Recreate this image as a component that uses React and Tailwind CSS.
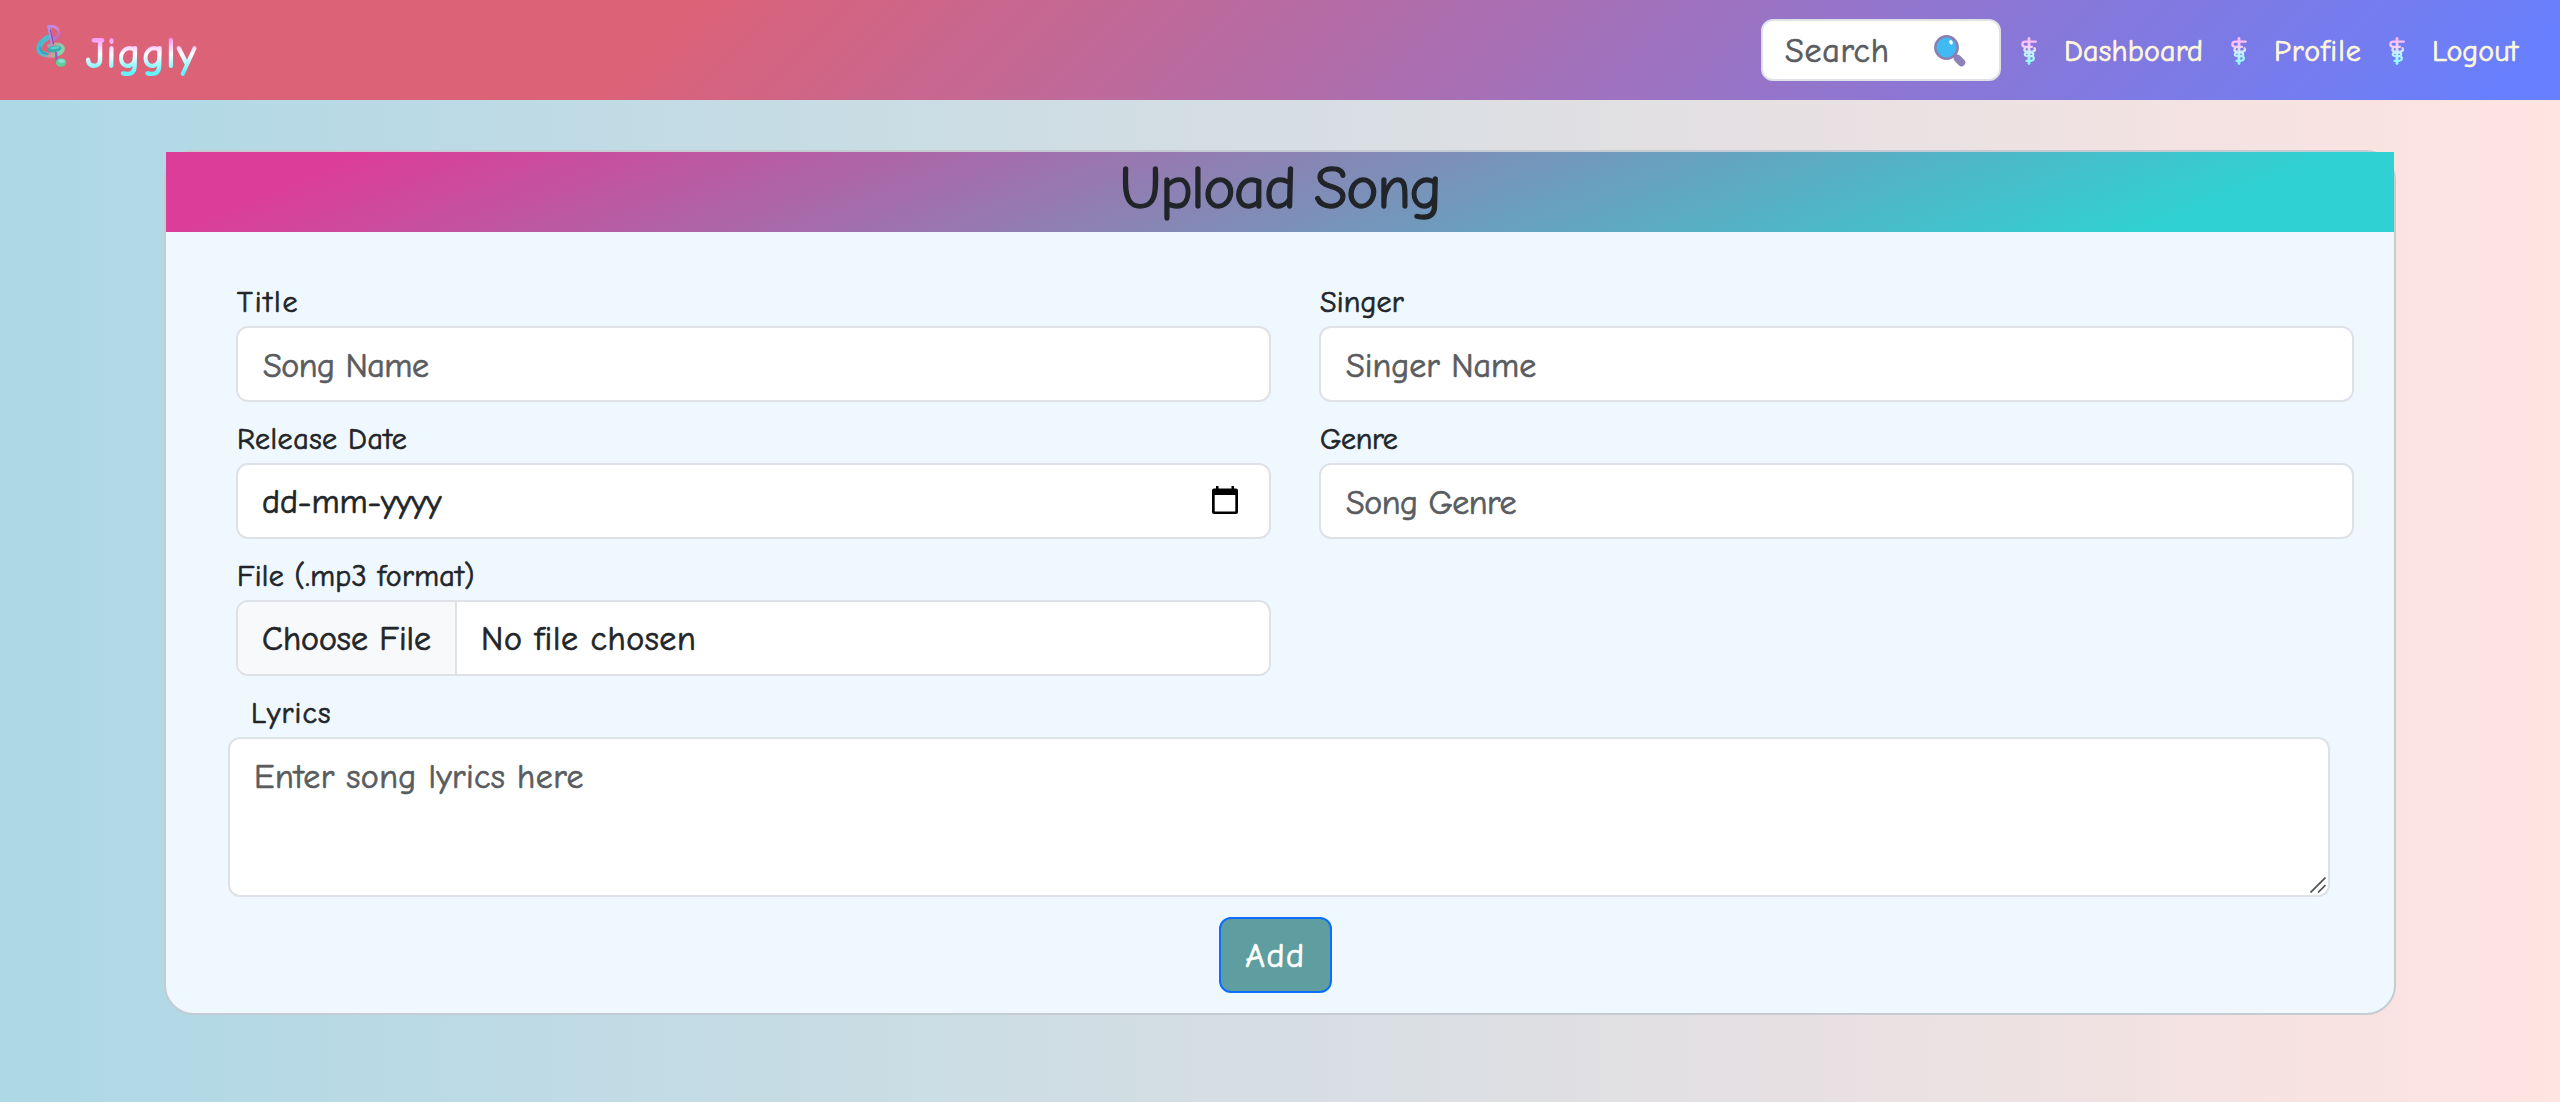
import React from "react";

function Logo() {
  return (
    <svg width="32" height="42" viewBox="0 0 32 42" className="mb-2 block shrink-0" fill="none">
      <defs>
        <linearGradient id="lg-body" x1="0" y1="0" x2="1" y2="0.2">
          <stop offset="0" stopColor="#3fbcd0" />
          <stop offset="0.4" stopColor="#58b8cc" />
          <stop offset="0.65" stopColor="#dd8f92" />
          <stop offset="1" stopColor="#8ccfae" />
        </linearGradient>
        <linearGradient id="lg-note" x1="0" y1="0" x2="1" y2="1">
          <stop offset="0" stopColor="#c58be6" />
          <stop offset="0.5" stopColor="#d67fc8" />
          <stop offset="1" stopColor="#b05fc0" />
        </linearGradient>
      </defs>
      <path d="M11.500 12.500C6 16 2.500 20 3 24.500c.7 5 9 6.500 15.500 5 7-1.700 8.500-5 7-7.500-1.500-2-6.500-2.500-11.500-1" stroke="url(#lg-body)" strokeWidth="5.400" strokeLinecap="round" />
      <path d="M4 22c-.3 4 3 6.500 8 7" stroke="#2f9fb8" strokeWidth="1.400" strokeLinecap="round" />
      <path d="M13 1.500c6-1 11 2.500 10 7.500-.6 3-3 4.500-6 6" stroke="url(#lg-note)" strokeWidth="3" strokeLinecap="round" />
      <path d="M13 1.500l3.500 17" stroke="#b98ae0" strokeWidth="3.600" strokeLinecap="round" />
      <path d="M14.500 5l3 14" stroke="#6f55b8" strokeWidth="1.200" strokeLinecap="round" />
      <path d="M20 28l.8 8" stroke="#8c5fc4" strokeWidth="2.400" strokeLinecap="round" />
      <ellipse cx="18.500" cy="24" rx="7" ry="3.300" fill="#37aeae" transform="rotate(-8 18.500 24)" />
      <ellipse cx="19" cy="22.800" rx="4.500" ry="1.300" fill="#63d0c8" transform="rotate(-8 19 22.800)" />
      <ellipse cx="25" cy="37.500" rx="5.200" ry="4.200" fill="#5fcf9c" />
      <ellipse cx="25.500" cy="36" rx="3.200" ry="1.800" fill="#8fe0da" />
    </svg>
  );
}

function Magnifier() {
  return (
    <svg width="32" height="32" viewBox="0 0 32 32" className="mt-0.5 block">
      <path d="M20 20l3 3" stroke="#8d82b3" strokeWidth="4" />
      <path d="M23.500 23.500l4 4" stroke="#8d82b3" strokeWidth="7.500" strokeLinecap="round" />
      <circle cx="12.500" cy="12.500" r="11.200" fill="#41b9f2" stroke="#8a7fb0" strokeWidth="2.400" />
      <ellipse cx="17" cy="7.300" rx="1.700" ry="2.300" fill="#fff" transform="rotate(-25 17 7.300)" />
    </svg>
  );
}

function Staff() {
  return (
    <svg width="16" height="28" viewBox="0 0 16 28" className="mt-0.5 block shrink-0" fill="none">
      <defs>
        <linearGradient id="staff" x1="0" y1="0" x2="0" y2="28" gradientUnits="userSpaceOnUse">
          <stop offset="0" stopColor="#ffb3f8" />
          <stop offset="0.3" stopColor="#fcc8fb" />
          <stop offset="0.55" stopColor="#c8efff" />
          <stop offset="1" stopColor="#84fbff" />
        </linearGradient>
      </defs>
      <g stroke="url(#staff)" strokeWidth="2.300" strokeLinecap="round">
        <path d="M8 1.400V26.600" strokeWidth="2.800" />
        <path d="M14.800 4.600H4.500C0.300 4.600 0.300 9.800 4.500 9.800H11" />
        <path d="M13.500 11.200C15 14 12.500 14.800 9 15C2.500 15.300 2.500 19.200 7 19.200H10.500C13.800 19.200 13.800 23.800 9.500 23.800H5.500" />
        <path d="M4 11.500C2.500 13.500 4 14.800 7.500 15C13 15.300 13 17.500 11 19" />
      </g>
    </svg>
  );
}

function Calendar() {
  return (
    <svg width="26" height="28" viewBox="0 0 26 28" className="mb-0.5 block">
      <path fillRule="evenodd" fill="#000" d="M4 0h2.500v2.500h13V0H22v2.500h2a2 2 0 0 1 2 2V26a2 2 0 0 1-2 2H2a2 2 0 0 1-2-2V4.500a2 2 0 0 1 2-2h2zM2.700 9v16.500h20.600V9z" />
    </svg>
  );
}

const box = "h-[76px] w-full rounded-[12px] border-2 border-[#dee2e6] bg-white text-[34px]";

function Field({ label, spacing, children }) {
  return (
    <div className="flex flex-col gap-1">
      <label className={"h-[42px] pt-0.5 pl-px text-[30px] leading-[42px] whitespace-nowrap " + spacing}>{label}</label>
      {children}
    </div>
  );
}

function TextInput({ placeholder, spacing }) {
  return <input type="text" placeholder={placeholder} className={box + " pt-[3px] pr-6 pl-[25px] placeholder:text-[#595c5f] " + spacing} />;
}

function NavLink({ children, width }) {
  return (
    <div className="flex items-center gap-[27px]">
      <Staff />
      <a className={"pt-[3px] whitespace-nowrap text-[30px] leading-[42px] text-[#fff8dc] " + width}>{children}</a>
    </div>
  );
}

export default function App() {
  return (
    <div className="flex h-[1102px] w-full flex-col overflow-hidden bg-[linear-gradient(to_right,#add8e6,#ffe4e1)] font-['Comic_Sans_MS','Comic_Neue','Noto_Sans',sans-serif] text-[#212529] [-webkit-text-stroke:0.7px] [font-variant-ligatures:none]">
      <nav className="flex h-[100px] shrink-0 items-center bg-[linear-gradient(135deg,#dc6278_26%,#6680ff_98.5%)] pr-10 pl-9">
        <Logo />
        <span className="mt-[7px] ml-[17px] bg-[linear-gradient(#ff9cf8_25%,#ffffff_50%,#5ff6ff_80%)] bg-clip-text text-[44px] leading-[60px] font-bold tracking-[0.3px] text-transparent [-webkit-text-stroke:0]">Jiggly</span>
        <div className="ml-auto flex h-[62px] w-[240px] items-center justify-between rounded-[12px] border-2 border-[#dee2e6] bg-white pr-[33px] pl-[22px]">
          <span className="pt-[3px] text-[34px] tracking-[0.7px] text-[#595c5f]">Search</span>
          <Magnifier />
        </div>
        <div className="ml-5 flex gap-7">
          <NavLink width="w-[139px] tracking-[0.2px]">Dashboard</NavLink>
          <NavLink width="w-[87px] tracking-[1px]">Profile</NavLink>
          <NavLink width="w-[88px]">Logout</NavLink>
        </div>
      </nav>

      <main className="mx-auto mt-[50px] h-[865px] w-[2232px] rounded-[30px] border-2 border-[#c5cbd2] bg-[#f0f8ff]">
        <h1 className="h-20 bg-[linear-gradient(158deg,#dc3d98_8%,#30d1d2_89.5%)] pt-1 text-center text-[61px] leading-[65px] tracking-[-1.4px] [-webkit-text-stroke:1.4px]">Upload Song</h1>
        <form className="flex flex-col pt-12">
          <div className="mr-10 ml-[70px] grid grid-cols-2 gap-x-12 gap-y-[15px]">
            <Field label="Title" spacing="tracking-[2px]">
              <TextInput placeholder="Song Name" spacing="tracking-[-0.5px]" />
            </Field>
            <Field label="Singer" spacing="tracking-[0.15px]">
              <TextInput placeholder="Singer Name" spacing="tracking-[0px]" />
            </Field>
            <Field label="Release Date" spacing="tracking-[0.5px]">
              <div className={box + " flex items-center justify-between pr-[31px] pl-6 tracking-[-0.1px]"}>
                <span className="pt-[3px]">dd-mm-yyyy</span>
                <Calendar />
              </div>
            </Field>
            <Field label="Genre" spacing="tracking-[-0.4px]">
              <TextInput placeholder="Song Genre" spacing="tracking-[-0.5px]" />
            </Field>
            <Field label="File (.mp3 format)" spacing="tracking-[0.35px]">
              <div className={box + " flex items-center overflow-hidden"}>
                <span className="flex h-full w-[219px] shrink-0 items-center border-r-2 border-[#dee2e6] bg-[#f8f9fa] pt-[3px] pl-6 whitespace-nowrap">Choose File</span>
                <span className="pt-[3px] pl-6 tracking-[0.6px]">No file chosen</span>
              </div>
            </Field>
          </div>
          <label className="mt-[15px] ml-[85px] h-[42px] pt-0.5 text-[30px] leading-[42px] tracking-[1.1px]">Lyrics</label>
          <div className="relative mt-1 ml-[62px] h-[160px] w-[2102px]">
            <textarea placeholder="Enter song lyrics here" className="block h-full w-full resize-none rounded-[12px] border-2 border-[#dee2e6] bg-white px-6 py-3.5 text-[34px] leading-[48px] tracking-[0.4px] placeholder:text-[#595c5f]" />
            <svg width="16" height="16" viewBox="0 0 16 16" className="absolute right-1 bottom-1 block" stroke="#4f5256" strokeWidth="1.700">
              <path d="M0.500 15.500L15.500 0.500M8 15.500L15.500 8" />
            </svg>
          </div>
          <button type="button" className="mt-5 ml-[1053px] h-[76px] w-[113px] rounded-[12px] border-2 border-[#0d6efd] bg-[#5f9ea0] pt-0.5 text-[34px] tracking-[1.5px] text-white">Add</button>
        </form>
      </main>
    </div>
  );
}
